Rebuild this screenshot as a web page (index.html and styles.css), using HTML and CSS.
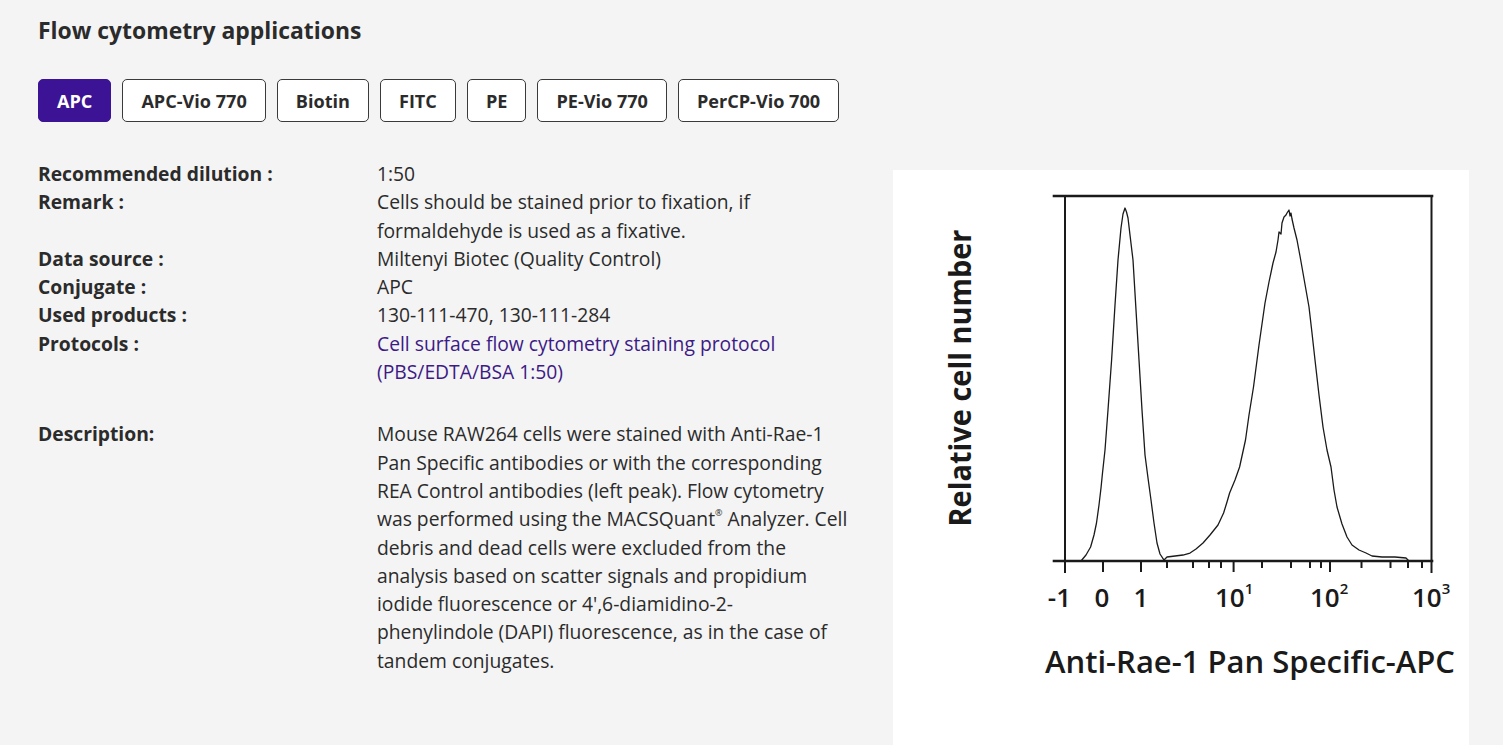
FILE: index.html
```html
<!DOCTYPE html>
<html lang="en">
<head>
<meta charset="utf-8">
<title>Flow cytometry applications</title>
<link rel="stylesheet" href="styles.css">
</head>
<body>
<section class="fc">
  <h2 class="fc-title">Flow cytometry applications</h2>
  <div class="tabs">
    <button class="tab active">APC</button>
    <button class="tab">APC-Vio 770</button>
    <button class="tab">Biotin</button>
    <button class="tab">FITC</button>
    <button class="tab">PE</button>
    <button class="tab">PE-Vio 770</button>
    <button class="tab">PerCP-Vio 700</button>
  </div>
  <div class="fc-body">
    <div class="info">
      <dl class="props">
        <dt>Recommended dilution :</dt><dd>1:50</dd>
        <dt>Remark :</dt><dd>Cells should be stained prior to fixation, if formaldehyde is used as a fixative.</dd>
        <dt>Data source :</dt><dd>Miltenyi Biotec (Quality Control)</dd>
        <dt>Conjugate :</dt><dd>APC</dd>
        <dt>Used products :</dt><dd>130-111-470, 130-111-284</dd>
        <dt>Protocols :</dt><dd><a class="link" href="#">Cell surface flow cytometry staining protocol (PBS/EDTA/BSA 1:50)</a></dd>
      </dl>
      <dl class="props desc">
        <dt>Description:</dt>
        <dd>Mouse RAW264 cells were stained with Anti-Rae-1 Pan Specific antibodies or with the corresponding REA Control antibodies (left peak). Flow cytometry was performed using the MACSQuant<sup class="reg">®</sup> Analyzer. Cell debris and dead cells were excluded from the analysis based on scatter signals and propidium iodide fluorescence or 4',6-diamidino-2-phenylindole (DAPI) fluorescence, as in the case of tandem conjugates.</dd>
      </dl>
    </div>
    <figure class="chart">
      <svg class="chart-svg" width="576" height="580" viewBox="893 170 576 580" xmlns="http://www.w3.org/2000/svg">
        <g fill="none" stroke="#1a1a1a" stroke-linecap="square">
          <line x1="1054" y1="196" x2="1432" y2="196" stroke-width="2.6"/>
          <line x1="1065" y1="196" x2="1065" y2="572" stroke-width="2"/>
          <line x1="1431.5" y1="196" x2="1431.5" y2="572" stroke-width="2"/>
          <line x1="1054" y1="561" x2="1432" y2="561" stroke-width="2.6"/>
          <g stroke-width="2" stroke-linecap="butt">
            <line x1="1103" y1="561" x2="1103" y2="572"/>
            <line x1="1141" y1="561" x2="1141" y2="572"/>
            <line x1="1233.6" y1="561" x2="1233.6" y2="572"/>
            <line x1="1330" y1="561" x2="1330" y2="572"/>
            <line x1="1167" y1="561" x2="1167" y2="568"/>
            <line x1="1193" y1="561" x2="1193" y2="568"/>
            <line x1="1209" y1="561" x2="1209" y2="568"/>
            <line x1="1221" y1="561" x2="1221" y2="568"/>
            <line x1="1262" y1="561" x2="1262" y2="568"/>
            <line x1="1291" y1="561" x2="1291" y2="568"/>
            <line x1="1310" y1="561" x2="1310" y2="568"/>
            <line x1="1321" y1="561" x2="1321" y2="568"/>
            <line x1="1361.5" y1="561" x2="1361.5" y2="568"/>
            <line x1="1390.5" y1="561" x2="1390.5" y2="568"/>
            <line x1="1408" y1="561" x2="1408" y2="568"/>
            <line x1="1422" y1="561" x2="1422" y2="568"/>
          </g>
          <polyline stroke-width="1.3" stroke-linejoin="round" points="1081,561 1086,555 1090.6,547 1094,535 1096.5,523 1099,505 1101,488 1102.5,473 1105,450 1108,410 1111.6,360 1115,305 1118,260 1121,228 1123,214 1125,208 1126.5,212 1128,218 1130,235 1133,260 1136,310 1139,360 1142,410 1145,455 1148,478 1151,500 1154,523 1157,543 1160,554 1164,560"/>
          <polyline stroke-width="1.3" stroke-linejoin="round" points="1164,560 1167,557 1175,556 1183,555 1190,553 1196,549 1203,543 1210,535 1218,525 1223.6,513 1227,502 1229.6,493 1235,480 1239.6,467 1245.5,440 1249,415 1253.5,387 1259,345 1265,303 1269,282 1273,263 1276,252 1278,240 1279,232 1281,234 1282,223 1284,217 1286,215 1287,213 1289,210 1290,216 1291,213 1292,219 1294,228 1297,240 1300,256 1303,273 1306,290 1309,307 1312,333 1315,360 1319,395 1323,427 1327,450 1331,467 1334,490 1337,507 1342,524 1347,537 1352,545 1359,550 1366,553 1372,556 1382,557 1395,557 1406,558 1408,560"/>
        </g>
        <g class="ticklabels" fill="#1a1a1a">
          <text x="1071" y="607" text-anchor="end">-1</text>
          <text x="1102" y="607" text-anchor="middle">0</text>
          <text x="1141" y="607" text-anchor="middle">1</text>
          <text x="1215" y="607">10<tspan class="sup" dy="-13">1</tspan></text>
          <text x="1310" y="607">10<tspan class="sup" dy="-13">2</tspan></text>
          <text x="1412" y="607">10<tspan class="sup" dy="-13">3</tspan></text>
        </g>
        <text class="xlabel" x="1045" y="673" textLength="410" lengthAdjust="spacingAndGlyphs">Anti-Rae-1 Pan Specific-APC</text>
        <text class="ylabel" transform="translate(971 378) rotate(-90)" text-anchor="middle" textLength="297" lengthAdjust="spacingAndGlyphs">Relative cell number</text>
      </svg>
    </figure>
  </div>
</section>
</body>
</html>
```

FILE: styles.css
```css
html, body {
  margin: 0;
  padding: 0;
}
body {
  background: #f4f4f4;
  color: #2b2b2b;
  font-family: "Open Sans", "Noto Sans", sans-serif;
  font-size: 19.3px;
  width: 1503px;
  height: 745px;
  overflow: hidden;
}
.fc {
  padding: 15px 34px 0 38px;
}
.fc-title {
  margin: 0;
  font-size: 22.9px;
  line-height: 32px;
  font-weight: 700;
  color: #2b2b2b;
}
.tabs {
  display: flex;
  gap: 11px;
  margin-top: 32px;
}
.tab {
  height: 43px;
  padding: 0 18px;
  border: 1px solid #3a3a3a;
  border-radius: 5px;
  background: #fff;
  color: #2b2b2b;
  font-family: "Open Sans", "Noto Sans", sans-serif;
  font-size: 18.1px;
  font-weight: 700;
  cursor: pointer;
}
.tab.active {
  background: #3b1394;
  border-color: #3b1394;
  color: #fff;
}
.fc-body {
  display: flex;
  justify-content: space-between;
  align-items: flex-start;
  margin-top: 38px;
}
.info {
  width: 820px;
}
.props {
  display: grid;
  grid-template-columns: 339px 472px;
  margin: 0;
  line-height: 28.3px;
}
.props dt {
  font-weight: 700;
  font-size: 19.3px;
}
.props dd {
  margin: 0;
}
.desc {
  margin-top: 34px;
}
.link {
  color: #3d1a86;
  text-decoration: none;
}
.reg {
  font-size: 9px;
  line-height: 11px;
  vertical-align: top;
  display: inline-block;
  margin-top: 2px;
}
.chart {
  margin: 10px 0 0 0;
  width: 576px;
  height: 580px;
  background: #fff;
}
.chart-svg {
  display: block;
}
.ticklabels text {
  font-family: "Open Sans", sans-serif;
  font-weight: 600;
  font-size: 26px;
}
.ticklabels .sup {
  font-size: 15px;
}
.xlabel {
  font-family: "Open Sans", sans-serif;
  font-weight: 600;
  font-size: 31px;
  fill: #1a1a1a;
}
.ylabel {
  font-family: "Open Sans", sans-serif;
  font-weight: 700;
  font-size: 31px;
  fill: #1a1a1a;
}
```
